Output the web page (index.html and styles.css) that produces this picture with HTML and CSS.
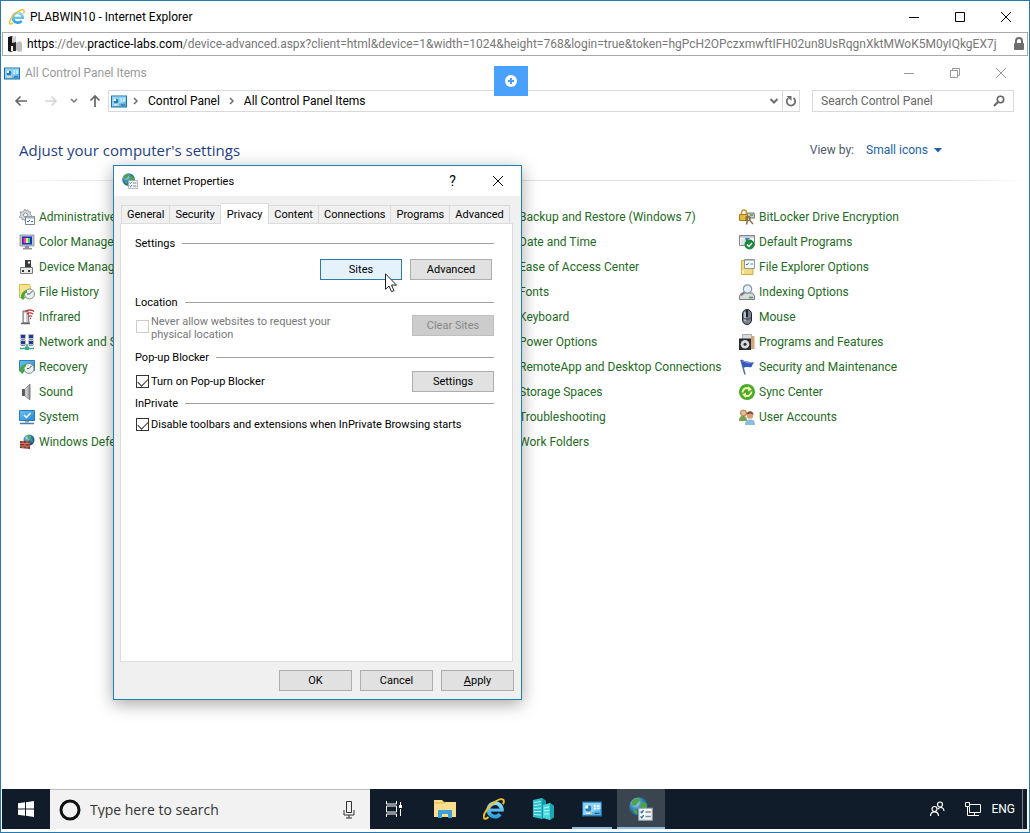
FILE: index.html
```html
<!DOCTYPE html>
<html lang="en">
<head>
    <meta charset="UTF-8">
    <title>PLABWIN10 - Internet Explorer</title>
    <link rel="stylesheet" href="styles.css">
</head>
<body>
<!-- shared icons -->
<svg class="defs" width="0" height="0" aria-hidden="true">
    <defs>
        <radialGradient id="earth" cx="0.35" cy="0.3" r="0.8">
            <stop offset="0" stop-color="#b9e4f5"/>
            <stop offset="0.45" stop-color="#2f7fb5"/>
            <stop offset="1" stop-color="#123d73"/>
        </radialGradient>
        <linearGradient id="screen" x1="0" y1="0" x2="1" y2="1">
            <stop offset="0" stop-color="#6cc3f2"/>
            <stop offset="1" stop-color="#2388d0"/>
        </linearGradient>
        <linearGradient id="metal" x1="0" y1="0" x2="1" y2="0">
            <stop offset="0" stop-color="#f0f1f3"/>
            <stop offset="1" stop-color="#85888e"/>
        </linearGradient>
        <linearGradient id="ring" x1="0" y1="0" x2="0" y2="1">
            <stop offset="0" stop-color="#8fdcfa"/>
            <stop offset="1" stop-color="#2fa0df"/>
        </linearGradient>
    </defs>
    <symbol id="i-ie" viewBox="0 0 16 16">
        <path d="M13.600 9.300A4.900 4.900 0 1 0 12.500 11.800" fill="none" stroke="url(#ring)" stroke-width="2.800"/>
        <path d="M5 7.700h10v2.200H5z" fill="#5bbdec"/>
        <path d="M4 13.800C2.400 15.300.9 15.500.6 14.200.1 12 3 7 7 4c3.200-2.500 6.500-3.800 7.700-2.700.7.700.5 2-.2 3.300" fill="none" stroke="#eebf2b" stroke-width="1.400"/>
    </symbol>
    <symbol id="i-cpl" viewBox="0 0 16 12">
        <rect x=".5" y=".5" width="15" height="11" fill="#5db9ee" stroke="#1f6ea5"/>
        <path d="M1 1h14v5L1 11z" fill="#8dd2f6"/>
        <circle cx="5" cy="5.500" r="2.500" fill="#fff"/>
        <path d="M5 5.500V3a2.500 2.500 0 1 1-2.500 2.500z" fill="#227db8"/>
        <path d="M9.500 3.500h1.500M12 3.500h2M9.500 5.500h1.500M12 5.500h2" stroke="#fff" stroke-width="1.200"/>
        <path d="M3 9.500h5" stroke="#fff"/>
        <path d="M10 9.500h4" stroke="#1d5d8e"/>
        <circle cx="7" cy="9.500" r=".8" fill="#f2b632"/>
    </symbol>
    <symbol id="i-inet" viewBox="0 0 16 16">
        <circle cx="6.500" cy="6.500" r="6.300" fill="url(#earth)"/>
        <path d="M2 3c1.500-2 4-2.500 5.500-2 .5 1.500-1.500 2-2 3.500S2.500 6 2 5zM8 4c2-1.500 3-.5 4 1 .5 2-1 4-2.500 3.500S7 6 8 4zM3 8c2 0 3 1.500 2.500 3.800C4 11.500 2.500 10 3 8z" fill="#4ea547"/>
        <path d="M6.500 7.500h9v8h-9z" fill="#f5f7f8" stroke="#9aa3aa" stroke-width=".7"/>
        <path d="M7.700 9.700l.8.800 1.300-1.700M7.700 13l.8.800 1.300-1.700" fill="none" stroke="#2470ad" stroke-width=".9"/>
        <path d="M11 10h3.500M11 13h3.500" stroke="#808890"/>
    </symbol>
    <symbol id="i-chevron" viewBox="0 0 8 10">
        <path d="M2 2l3 3-3 3" fill="none" stroke="#6b6b6b" stroke-width="1.500"/>
    </symbol>
    <symbol id="i-close" viewBox="0 0 12 12">
        <path d="M1 1l10 10M11 1L1 11" stroke="currentColor"/>
    </symbol>
    <symbol id="i-down" viewBox="0 0 10 8">
        <path d="M1.500 2l3.500 3.500L8.500 2" fill="none" stroke="#6d6d6d" stroke-width="2"/>
    </symbol>
</svg>

<div class="browser">
    <header class="titlebar">
        <svg class="icon" width="16" height="16"><use href="#i-ie"/></svg>
        <span class="caption">PLABWIN10 - Internet Explorer</span>
        <div class="controls">
            <button aria-label="Minimize"><svg width="12" height="12"><path d="M1 6.500h10" stroke="currentColor"/></svg></button>
            <button aria-label="Maximize"><svg width="12" height="12"><path d="M1.500 1.500h9v9h-9z" fill="none" stroke="currentColor"/></svg></button>
            <button aria-label="Close"><svg width="12" height="12"><use href="#i-close"/></svg></button>
        </div>
    </header>

    <div class="urlbar">
        <svg width="16" height="16" viewBox="0 0 16 16">
            <path d="M1 1l4-1 1 1v14l-2 1-3-1z" fill="#161616"/>
            <path d="M5 1l4-1v7l-4 2z" fill="#d2d2d2"/>
            <path d="M5 7l4-1v9H6l-1-4z" fill="#262626"/>
            <path d="M9 7l4-2 2 2v8l-3 1-3-2z" fill="#bdbdbd"/>
            <path d="M4 10h2v5H4z" fill="#f1f1f1"/>
        </svg>
        <div class="url"><b>https</b>://dev.<b>practice-labs.com</b>/device-advanced.aspx?client=html&amp;device=1&amp;width=1024&amp;height=768&amp;login=true&amp;token=hgPcH2OPczxmwftIFH02un8UsRqgnXktMWoK5M0yIQkgEX7j</div>
        <svg width="12" height="14" viewBox="0 0 12 14">
            <path d="M3 6V4a3 3 0 0 1 6 0v2" fill="none" stroke="#6d6d6d" stroke-width="2"/>
            <rect x="1" y="6" width="10" height="7" rx="1" fill="#6d6d6d"/>
        </svg>
    </div>

    <main class="remote">
        <div class="explorer-title">
            <svg width="16" height="13"><use href="#i-cpl"/></svg>
            <span class="caption">All Control Panel Items</span>
            <div class="controls">
                <button aria-label="Minimize"><svg width="12" height="12"><path d="M1 6.500h10" stroke="currentColor"/></svg></button>
                <button aria-label="Restore"><svg width="12" height="12"><path d="M1.500 3.500h7v7h-7zM3.500 3.500v-2h7v7h-2" fill="none" stroke="currentColor"/></svg></button>
                <button aria-label="Close"><svg width="12" height="12"><use href="#i-close"/></svg></button>
            </div>
        </div>
        <button class="session" aria-label="Session menu">
            <svg width="14" height="14" viewBox="0 0 14 14">
                <circle cx="7" cy="7" r="6" fill="#fff"/>
                <path d="M7 4v6M4 7h6" stroke="#4aa1fb" stroke-width="2"/>
            </svg>
        </button>

        <nav class="navbar">
            <button aria-label="Back"><svg width="14" height="12"><path d="M13 6H2M6.500 1.500L2 6l4.500 4.500" fill="none" stroke="#666" stroke-width="1.600"/></svg></button>
            <button aria-label="Forward"><svg width="14" height="12"><path d="M1 6h11M7.500 1.500L12 6l-4.500 4.500" fill="none" stroke="#d4d4d4" stroke-width="1.600"/></svg></button>
            <button class="recent" aria-label="Recent locations"><svg width="8" height="6"><path d="M1 1l3 3 3-3" fill="none" stroke="#777" stroke-width="1.500"/></svg></button>
            <button class="up" aria-label="Up"><svg width="12" height="14"><path d="M6 13V2M1.500 6.500L6 2l4.500 4.500" fill="none" stroke="#666" stroke-width="1.700"/></svg></button>
            <div class="address">
                <svg width="16" height="13"><use href="#i-cpl"/></svg>
                <svg width="8" height="10"><use href="#i-chevron"/></svg>
                <a href="#">Control Panel</a>
                <svg width="8" height="10"><use href="#i-chevron"/></svg>
                <a href="#">All Control Panel Items</a>
                <button class="history" aria-label="Previous locations"><svg width="10" height="8"><use href="#i-down"/></svg></button>
                <button class="refresh" aria-label="Refresh">
                    <svg width="12" height="12"><path d="M3.200 3.200A4.200 4.200 0 1 0 8.500 3" fill="none" stroke="#6d6d6d" stroke-width="1.800"/><path d="M1.500 1h5v5z" fill="#6d6d6d"/></svg>
                </button>
            </div>
            <div class="search">
                <input type="text" placeholder="Search Control Panel" aria-label="Search Control Panel">
                <svg width="12" height="12"><circle cx="7.500" cy="4.500" r="3.200" fill="none" stroke="#666" stroke-width="1.600"/><path d="M5.200 6.800L1 11" stroke="#666" stroke-width="2"/></svg>
            </div>
        </nav>

        <div class="heading">
            <h1>Adjust your computer's settings</h1>
            <label for="viewby">View by:</label>
            <select id="viewby"><option>Small icons</option></select>
            <svg width="8" height="5"><path d="M0 0h8L4 4.500z" fill="#1c5fa8"/></svg>
        </div>

        <div class="items">
            <ul>
                <li><a href="#">
                    <svg width="16" height="16"><path d="M6 0l1 2 2-1 1 2 2 0-1 2 2 2-2 1v2H8l-2 2-1-2-2 1V9L0 8l2-2L1 3l3 0z" fill="#d6d9dc" stroke="#8d9297" stroke-width=".8"/><circle cx="6.500" cy="6" r="2" fill="#fff" stroke="#8d9297"/><path d="M6.500 7.500h9v8h-9z" fill="#fff" stroke="#7d8790"/><path d="M7 8.500h8" stroke="#a3b6c8" stroke-width="2"/><path d="M8 12l1 1 2-2M12 12.500h2" fill="none" stroke="#2a75b9"/></svg>
                    Administrative</a></li>
                <li><a href="#">
                    <svg width="16" height="16"><path d="M1 1h14v11H1z" fill="#c4c8cf" stroke="#7b8088" stroke-width=".7"/><path d="M3 2.500h10v8H3z" fill="#1a2fc4"/><path d="M5 4h2v5H5z" fill="#ef3ad0"/><path d="M7 4h2v5H7z" fill="#fff36b"/><path d="M9 4h2v5H9z" fill="#37d86a"/><path d="M4 4h1v5H4z" fill="#e02020"/><path d="M6 12h4v2h3v1.500H4V14h2z" fill="#8c9097"/></svg>
                    Color Manage</a></li>
                <li><a href="#">
                    <svg width="16" height="16"><path d="M6 1h6v7H6z" fill="#3a3c3f"/><path d="M9 2.500h2v2H9z" fill="#fff"/><path d="M1.500 8.500h12v6h-12z" fill="#e8e9ea" stroke="#77797c"/><path d="M3 11h2v2H3zM9 11h2v2H9z" fill="#333"/></svg>
                    Device Manag</a></li>
                <li><a href="#">
                    <svg width="16" height="16"><path d="M.5.500h10l1 3v10H.5z" fill="#f8e58b" stroke="#d6b84f"/><circle cx="10.500" cy="10" r="5" fill="#e9efec" stroke="#84908b"/><path d="M10.500 10l3-3M10.500 10H8" stroke="#555"/><path d="M2 13c0-4 2.500-6.500 6-7v2.500c-2 .5-3 2-3 4.500h1.500L4 16l-3-3z" fill="#47aa38"/></svg>
                    File History</a></li>
                <li><a href="#">
                    <svg width="16" height="16"><path d="M4 2h5l1 12H4z" fill="#cfcfd1" stroke="#6f7073"/><path d="M6 4v9" stroke="#fff" stroke-width="2"/><path d="M2 14.500h9" stroke="#66676a" stroke-width="1.500"/><path d="M6 2.500c3-2 7-2 9 0M8 5c2-1.500 4-1.500 6 0M9.500 7.500c1-.8 2.500-.8 3.500 0M11 9.500h1" fill="none" stroke="#c93232" stroke-width="1.300"/></svg>
                    Infrared</a></li>
                <li><a href="#">
                    <svg width="16" height="16"><g fill="#21399f" stroke="#b9bfca"><path d="M1.500.500h5v4h-5zM9.500.500h5v4h-5zM1.500 6.500h5v4h-5zM9.500 6.500h5v4h-5z"/></g><path d="M2 5.500h4M10 5.500h4M2 11.500h4M10 11.500h4" stroke="#888"/><path d="M8 10v4M1 14.500h14" stroke="#36a98a" stroke-width="1.500"/><path d="M6 12.500h4V16H6z" fill="#36a98a"/></svg>
                    Network and S</a></li>
                <li><a href="#">
                    <svg width="16" height="16"><path d="M.5 1.500h15v10H.5z" fill="url(#screen)" stroke="#2c7fb9"/><circle cx="10" cy="9.500" r="5" fill="#e9efec" stroke="#84908b"/><path d="M10 9.500l3-3M10 9.500H8" stroke="#555"/><path d="M1 12c0-4 2.500-6.500 6-7v2.500c-2 .5-3 2-3 4.500h1.500L3.500 15 0 12z" fill="#47aa38"/></svg>
                    Recovery</a></li>
                <li><a href="#">
                    <svg width="16" height="16"><path d="M3 5h3v7H3z" fill="#5a5c60"/><path d="M6 5l5-5v16l-5-4z" fill="url(#metal)" stroke="#75777c" stroke-width=".7"/><path d="M11 0c1.500 4 1.500 12 0 16" fill="#b7b9be"/></svg>
                    Sound</a></li>
                <li><a href="#">
                    <svg width="16" height="16"><path d="M.5 1.500h15v10H.5z" fill="url(#screen)" stroke="#2b7ab5"/><path d="M5 6l2.500 2.500L11.500 4" fill="none" stroke="#fff" stroke-width="1.500"/><path d="M6 12h4v1.500H6z" fill="#9ca3aa"/><path d="M1 14.500h14" stroke="#4d7da0" stroke-width="1.500"/></svg>
                    System</a></li>
                <li><a href="#">
                    <svg width="16" height="16"><circle cx="10" cy="6" r="5.500" fill="url(#earth)"/><path d="M8 2c2-2 4 0 4 1s-2 2-3 2zM12 5c2 0 2 3 1 4z" fill="#56ad4f"/><path d="M1 7h10v8L1 14z" fill="#8e3527"/><path d="M1 9.500h10M1 12h10M4 7v2.500M8 7v2.500M6 9.500V12M4 12v2.500M8 12v3" stroke="#d19a85" stroke-width=".7"/></svg>
                    Windows Defe</a></li>
            </ul>
            <ul class="third">
                <li><a href="#">Backup and Restore (Windows 7)</a></li>
                <li><a href="#">Date and Time</a></li>
                <li><a href="#">Ease of Access Center</a></li>
                <li><a href="#">Fonts</a></li>
                <li><a href="#">Keyboard</a></li>
                <li><a href="#">Power Options</a></li>
                <li><a href="#">RemoteApp and Desktop Connections</a></li>
                <li><a href="#">Storage Spaces</a></li>
                <li><a href="#">Troubleshooting</a></li>
                <li><a href="#">Work Folders</a></li>
            </ul>
            <ul>
                <li><a href="#">
                    <svg width="16" height="16"><path d="M7 4h8l1 5H8z" fill="#c9ccd0" stroke="#777"/><path d="M11 6h3" stroke="#48a03e" stroke-width="1.500"/><path d="M2.500 6V3.500a2.500 2.500 0 0 1 5 0V6" fill="none" stroke="#c29531" stroke-width="1.500"/><path d="M.5 5.500h8v6h-8z" fill="#e8b93f" stroke="#a3771b"/><circle cx="9" cy="9.500" r="2" fill="none" stroke="#7a6a45" stroke-width="1.400"/><path d="M8.500 11l-1 4.500M10.500 11l3.500 4" stroke="#8c7a4e" stroke-width="1.600"/></svg>
                    BitLocker Drive Encryption</a></li>
                <li><a href="#">
                    <svg width="16" height="16"><path d="M.5 1.500h15v10H.5z" fill="#fff" stroke="#7b858d"/><path d="M1 2h14v2H1z" fill="#c8ced3"/><path d="M2 5h4v6H2z" fill="#dde3e8"/><path d="M6 4h5L7 8z" fill="#2f80c4"/><circle cx="10.500" cy="10.500" r="5" fill="#19893a"/><path d="M8 10.500l2 2 3-3.500" fill="none" stroke="#fff" stroke-width="1.500"/></svg>
                    Default Programs</a></li>
                <li><a href="#">
                    <svg width="16" height="16"><path d="M2.500 1.500h5l1 2h5.500v12H2.500z" fill="#f6db7c" stroke="#d2ab43"/><path d="M5.500.500h10v9h-10z" fill="#fff" stroke="#8a98a5"/><path d="M6 1.500h9" stroke="#b9c4cd"/><path d="M7 5l1 1 2-2.500M11.500 5H14" fill="none" stroke="#2574b9"/><path d="M4 11v4" stroke="#fff1b3" stroke-width="2"/></svg>
                    File Explorer Options</a></li>
                <li><a href="#">
                    <svg width="16" height="16"><path d="M2.500 9h11l2 3v3.500H.5V12z" fill="#d9dadd" stroke="#797c82"/><path d="M10 13.500h4" stroke="#42a53b" stroke-width="1.500"/><path d="M5.500 8L2 11.500" stroke="#777b83" stroke-width="1.800"/><circle cx="8.500" cy="5" r="4.200" fill="#e2f0fa" stroke="#8b99a7" stroke-width="1.200"/></svg>
                    Indexing Options</a></li>
                <li><a href="#">
                    <svg width="16" height="16"><rect x="3.500" y=".5" width="9" height="15" rx="4.500" fill="#76828d" stroke="#202428"/><path d="M6 3v9" stroke="#c9d1d8" stroke-width="1.500"/><path d="M8 1v7" stroke="#1d2125" stroke-width="2"/><path d="M4 9c2 1.500 6 1.500 8 0" fill="none" stroke="#3c454d"/></svg>
                    Mouse</a></li>
                <li><a href="#">
                    <svg width="16" height="16"><path d="M3.500.500h9v14h-9z" fill="#d9dadc" stroke="#aaa"/><path d="M12 2h3.500v13H12z" fill="#d2a77a"/><path d="M0 4.500h12V16H0z" fill="#292b2e"/><circle cx="6" cy="10.300" r="4.300" fill="#d7dade"/><circle cx="6" cy="10.300" r="1.500" fill="#292b2e"/></svg>
                    Programs and Features</a></li>
                <li><a href="#">
                    <svg width="16" height="16"><path d="M2 1l4 14.500" stroke="#5b6b96" stroke-width="1.500"/><path d="M1.500 1c3-1 4 2 7 1.500 2 0 2 1.500 7 1-2 1-2 3-3 4.500-3 1-4.500-1-8 1z" fill="#3559be"/><path d="M3 2c3 0 4 2 8 2" fill="none" stroke="#8ea9ea"/></svg>
                    Security and Maintenance</a></li>
                <li><a href="#">
                    <svg width="16" height="16"><circle cx="8" cy="8" r="8" fill="#49a92f"/><path d="M3.500 8.500A4.500 4.500 0 0 1 10 4.500M12.500 7.500A4.500 4.500 0 0 1 6 11.500" fill="none" stroke="#f0f9a5" stroke-width="2"/><path d="M9 2l4 3.500-4 2zM7 14l-4-3.500 4-2z" fill="#f0f9a5"/></svg>
                    Sync Center</a></li>
                <li><a href="#">
                    <svg width="16" height="16"><path d="M0 12c0-4 1.500-5 4-5s4 1 4 5z" fill="#7aa355"/><circle cx="4.500" cy="4" r="3" fill="#e6bc8e" stroke="#96692f" stroke-width=".8"/><path d="M6 16c0-4 1.500-5.500 5-5.500S16 12 16 16z" fill="#8bbbe0"/><circle cx="11" cy="6.500" r="3.300" fill="#d7a073"/><path d="M7.500 6c0-5 7-5 7 0-2-2-5-2-7 0z" fill="#7b3f27"/></svg>
                    User Accounts</a></li>
            </ul>
        </div>

        <section class="dialog" role="dialog" aria-label="Internet Properties">
            <div class="dialog-title">
                <svg width="16" height="16"><use href="#i-inet"/></svg>
                <span>Internet Properties</span>
                <button class="help" aria-label="Help">?</button>
                <button aria-label="Close"><svg width="12" height="12"><use href="#i-close"/></svg></button>
            </div>
            <div class="dialog-body">
                <div class="tabs" role="tablist">
                    <button role="tab">General</button>
                    <button role="tab">Security</button>
                    <button role="tab" class="active" aria-selected="true">Privacy</button>
                    <button role="tab">Content</button>
                    <button role="tab">Connections</button>
                    <button role="tab">Programs</button>
                    <button role="tab">Advanced</button>
                </div>
                <div class="panel">
                    <h2>Settings</h2>
                    <div class="row buttons">
                        <button class="btn hover">Sites</button>
                        <button class="btn">Advanced</button>
                    </div>
                    <h2>Location</h2>
                    <div class="row location">
                        <input type="checkbox" id="never" disabled>
                        <label for="never">Never allow websites to request your physical location</label>
                        <button class="btn" disabled>Clear Sites</button>
                    </div>
                    <h2>Pop-up Blocker</h2>
                    <div class="row popup">
                        <input type="checkbox" id="popup" checked>
                        <label for="popup">Turn on Pop-up Blocker</label>
                        <button class="btn">Settings</button>
                    </div>
                    <h2>InPrivate</h2>
                    <div class="row inprivate">
                        <input type="checkbox" id="toolbars" checked>
                        <label for="toolbars">Disable toolbars and extensions when InPrivate Browsing starts</label>
                    </div>
                </div>
                <div class="dialog-actions">
                    <button class="btn">OK</button>
                    <button class="btn">Cancel</button>
                    <button class="btn"><u>A</u>pply</button>
                </div>
            </div>
            <svg class="cursor" width="12" height="20" viewBox="0 0 12 20"><path d="M.5.800v15.500l3.500-3.300 2.500 5.700 2.500-1.100-2.500-5.500h5z" fill="#fff" stroke="#222"/></svg>
        </section>
    </main>

    <footer class="taskbar">
        <button class="start" aria-label="Start">
            <svg width="16" height="16" viewBox="0 0 16 16"><path d="M0 2.300l7-1v6.200H0zM8 1.200L16 0v7.500H8zM0 8.500h7v6.200l-7-1zM8 8.500h8V16l-8-1.200z" fill="#fff"/></svg>
        </button>
        <div class="cortana">
            <svg width="22" height="22"><circle cx="11" cy="11" r="9" fill="none" stroke="#111" stroke-width="3"/></svg>
            <input type="text" placeholder="Type here to search" aria-label="Type here to search">
            <svg width="12" height="18"><path d="M3.500.500h5v11h-5zM1 9v5h10V9M6 14v3M3 17h6" fill="none" stroke="#333"/></svg>
        </div>
        <div class="tasks">
            <button class="view" aria-label="Task View"><svg width="16" height="16"><path d="M.5 0v3h10V0M.5 16v-3h10v3M.5 5h10v6H.5z" fill="none" stroke="#fff"/><path d="M14.500 1v3M14.500 8v7" stroke="#fff"/><path d="M13 4h3v3h-3z" fill="#fff"/></svg></button>
            <button aria-label="File Explorer"><svg width="22" height="20"><path d="M0 1h8l2 2h12v15H0z" fill="#f9df8d"/><path d="M0 4h10l2-1" fill="none" stroke="#dfb64a"/><path d="M4 19v-8h14v8h-4v-4H8v4z" fill="#3ba1d8"/></svg></button>
            <button aria-label="Internet Explorer"><svg width="22" height="22"><use href="#i-ie"/></svg></button>
            <button aria-label="Server Manager"><svg width="22" height="24"><path d="M1 3l9-2 4 3v16l-4 2-9-2z" fill="#2bc0cb"/><path d="M10 1l4 3v16l-4 2z" fill="#1596a5"/><path d="M2 5.500l7-1M2 8.500l7-1M2 11.500l7-.5M2 14.500h7M2 17.500l7 .5" stroke="#b4f5f5"/><path d="M11 8l7-2 4 3v11l-4 3-7-2z" fill="#45d5dc"/><path d="M18 6l4 3v11l-4 3z" fill="#1da5b1"/><path d="M12 11l5-1M12 14l5-.5M12 17h5" stroke="#c2fafa"/></svg></button>
            <button class="open" aria-label="Control Panel"><svg width="20" height="16"><use href="#i-cpl"/></svg></button>
            <button class="open current" aria-label="Internet Properties"><svg width="24" height="24"><use href="#i-inet"/></svg></button>
        </div>
        <div class="tray">
            <button class="people" aria-label="People"><svg width="16" height="16"><g fill="none" stroke="#fff" stroke-width="1.200"><circle cx="11" cy="3.500" r="2.500"/><path d="M9 8c3-3 6-1 6 2"/><circle cx="5.500" cy="8" r="2.500"/><path d="M1.500 15c0-5.500 8-5.500 8 0"/></g></svg></button>
            <button aria-label="Network"><svg width="16" height="14"><path d="M5 2.500h10.500v8H4.500V5M9.500 10.500v3M5 13.500h9M2.500 5v8.500H5M.5.500h4v4h-4z" fill="none" stroke="#fff"/></svg></button>
            <button>ENG</button>
        </div>
    </footer>
</div>
</body>
</html>
```
FILE: styles.css
```css
* {
    box-sizing: border-box;
}

body {
    margin: 0;
    font-family: Roboto, "Open Sans", sans-serif;
    font-size: 12px;
    line-height: 16px;
    color: #1a1a1a;
    background: #fff;
}

button, input, select {
    font: inherit;
    color: inherit;
}

button {
    display: flex;
    align-items: center;
    justify-content: center;
    padding: 0;
    border: none;
    background: none;
}

a {
    color: inherit;
    text-decoration: none;
}

svg {
    display: block;
    flex: none;
}

input[type="checkbox"] {
    position: relative;
    appearance: none;
    width: 13px;
    height: 13px;
    margin: 0 0 0 1px;
    border: 1px solid #333;
    background: #fff;
}

input[type="checkbox"]:disabled {
    border-color: #ccc;
}

input[type="checkbox"]:checked::before {
    content: "";
    position: absolute;
    top: 2px;
    left: 1px;
    width: 9px;
    height: 5px;
    border: solid #333;
    border-width: 0 0 1px 1px;
    transform: rotate(-45deg);
}

.defs {
    position: absolute;
}

.browser {
    display: flex;
    flex-direction: column;
    min-height: 100vh;
    border: 1px solid #2578b0;
}

/* window title */
.titlebar {
    display: flex;
    align-items: center;
    height: 31px;
    padding-left: 8px;
    color: #000;
}

.titlebar .caption {
    margin-left: 5px;
}

.controls {
    display: flex;
    height: 28px;
    margin-left: auto;
}

.controls button {
    width: 46px;
}

.urlbar {
    display: flex;
    align-items: center;
    height: 24px;
    margin: 0 1px;
    padding: 0 2px 0 4px;
    border: 1px solid #a9a9a9;
}

.url {
    flex: 1;
    margin: 0 5px 0 4px;
    overflow: hidden;
    white-space: nowrap;
    color: #777;
}

.url b {
    font-weight: normal;
    color: #000;
}

/* remote desktop */
.remote {
    position: relative;
    flex: 1;
}

.explorer-title {
    display: flex;
    align-items: center;
    height: 34px;
    padding: 0 5px 0 3px;
    color: #999;
}

.explorer-title .caption {
    margin-left: 5px;
}

.session {
    position: absolute;
    top: 10px;
    left: 50%;
    width: 34px;
    height: 30px;
    margin-left: -21px;
    background: #4aa1fb;
}

.navbar {
    display: flex;
    align-items: center;
    padding: 0 15px 0 13px;
}

.navbar > button {
    width: 14px;
    margin-right: 16px;
}

.navbar > .recent {
    width: 8px;
    margin: 0 11px 0 -4px;
}

.navbar > .up {
    width: 12px;
    margin-right: 7px;
}

.address {
    display: flex;
    flex: 1;
    align-items: center;
    gap: 8px;
    height: 22px;
    padding-left: 2px;
    border: 1px solid #d9d9d9;
    color: #000;
}

.address svg + svg {
    margin-left: -3px;
}

.address .history {
    width: 16px;
    margin-left: auto;
    margin-right: -8px;
}

.address .refresh {
    width: 17px;
    height: 20px;
    border-left: 1px solid #d9d9d9;
}

.search {
    display: flex;
    align-items: center;
    width: 202px;
    height: 22px;
    margin-left: 12px;
    padding: 0 8px;
    border: 1px solid #d9d9d9;
}

.search input {
    flex: 1;
    min-width: 0;
    padding: 0;
    border: none;
    outline: none;
    background: none;
}

.search input::placeholder {
    color: #666;
    opacity: 1;
}

.heading {
    display: flex;
    align-items: center;
    height: 68px;
    padding: 8px 87px 0 18px;
    color: #1c5fa8;
}

.heading h1 {
    flex: 1;
    margin: 0;
    font-family: "Open Sans", sans-serif;
    font-size: 15px;
    font-weight: normal;
    line-height: 22px;
    color: #1e3f86;
}

.heading label {
    margin-right: 12px;
    color: #4c5a6a;
}

.heading select {
    appearance: none;
    margin-right: 6px;
    padding: 0;
    border: none;
    background: none;
}

.items {
    display: grid;
    grid-template-columns: repeat(4, 240px);
    padding: 24px 18px;
    background: linear-gradient(to right, #fff, #dde1e6 12%, #dde1e6 92%, #fff) no-repeat 0 0 / 100% 1px;
}

.items ul {
    margin: 0;
    padding: 0;
    list-style: none;
}

.items .third {
    grid-column: 3;
    padding-left: 20px;
}

.items a {
    display: flex;
    align-items: center;
    gap: 4px;
    height: 25px;
    white-space: nowrap;
    color: #1e6b22;
}

/* dialog window */
.dialog {
    position: absolute;
    top: 109px;
    left: 112px;
    width: 409px;
    border: 1px solid #1f7fb8;
    background: #f0f0f0;
    box-shadow: 0 4px 16px rgba(0, 0, 0, 0.35);
    font-size: 11px;
    line-height: 13px;
    color: #000;
}

.dialog-title {
    display: flex;
    align-items: center;
    height: 30px;
    padding: 0 1px 0 8px;
    background: #fff;
}

.dialog-title span {
    flex: 1;
    margin-left: 5px;
}

.dialog-title button {
    width: 45px;
}

.dialog-title .help {
    font-size: 14px;
}

.dialog-body {
    padding: 7px 8px 8px 6px;
}

.tabs {
    display: flex;
    align-items: flex-end;
    padding: 0 1px;
}

.tabs button {
    height: 18px;
    padding: 0 5px;
    border: 1px solid #d9d9d9;
    border-width: 1px 1px 0 0;
}

.tabs button:first-child {
    border-left-width: 1px;
}

.tabs .active {
    height: 21px;
    margin-bottom: -1px;
    padding: 0 6px;
    background: #fff;
}

.panel {
    height: 439px;
    padding: 13px 18px 0 14px;
    border: 1px solid #dcdcdc;
    background: #fff;
}

.panel h2 {
    display: flex;
    align-items: center;
    gap: 7px;
    margin: 0;
    font-size: 11px;
    font-weight: normal;
    line-height: 13px;
}

.panel h2::after {
    content: "";
    flex: 1;
    height: 1px;
    background: #a0a0a0;
}

.btn {
    width: 82px;
    height: 21px;
    border: 1px solid #adadad;
    background: #e1e1e1;
}

.btn:disabled {
    border-color: #bfbfbf;
    background: #ccc;
    color: #888;
}

.btn.hover {
    border-color: #2b7aa8;
    background: #e5f1fb;
}

.row {
    display: flex;
    align-items: center;
}

.row label {
    flex: 1;
    margin-left: 2px;
}

.buttons {
    justify-content: flex-end;
    gap: 8px;
    padding: 9px 2px 16px 0;
}

.location {
    align-items: flex-start;
    height: 42px;
    padding-top: 6px;
}

.location input[type="checkbox"] {
    margin-top: 5px;
}

.location label {
    padding-right: 60px;
    color: #777;
}

.popup {
    padding: 7px 0 5px;
}

.inprivate {
    height: 28px;
}

.dialog-actions {
    display: flex;
    justify-content: flex-end;
    gap: 8px;
    margin: 8px -1px 0 0;
}

.dialog-actions .btn {
    width: 73px;
}

.cursor {
    position: absolute;
    top: 107px;
    left: 271px;
}

/* taskbar */
.taskbar {
    display: flex;
    height: 40px;
    margin: 0 2px 3px 1px;
    background: #101c29;
    color: #fff;
}

.start {
    width: 48px;
}

.cortana {
    display: flex;
    align-items: center;
    width: 320px;
    padding: 0 15px 0 9px;
    border-top: 1px solid #bbb;
    background: #f2f2f2;
    color: #333;
}

.cortana input {
    flex: 1;
    min-width: 0;
    padding: 0;
    margin-left: 9px;
    border: none;
    outline: none;
    background: none;
    font-family: "Open Sans", sans-serif;
    font-size: 14px;
}

.cortana input::placeholder {
    color: #333;
    opacity: 1;
}

.tasks {
    display: flex;
    gap: 1px;
}

.tasks button {
    width: 48px;
}

.tasks .view {
    margin-right: 2px;
}

.tasks .open {
    background: linear-gradient(#8fbce6, #8fbce6) no-repeat center bottom / 40px 2px;
}

.tasks .current {
    background: #3b4550 linear-gradient(#8fbce6, #8fbce6) no-repeat center bottom / 48px 2px;
}

.tray {
    display: flex;
    gap: 10px;
    margin-left: auto;
    margin-right: 4px;
    padding-right: 7px;
    border-right: 1px solid #7c858f;
}

.tray .people {
    margin-right: 10px;
}
```
